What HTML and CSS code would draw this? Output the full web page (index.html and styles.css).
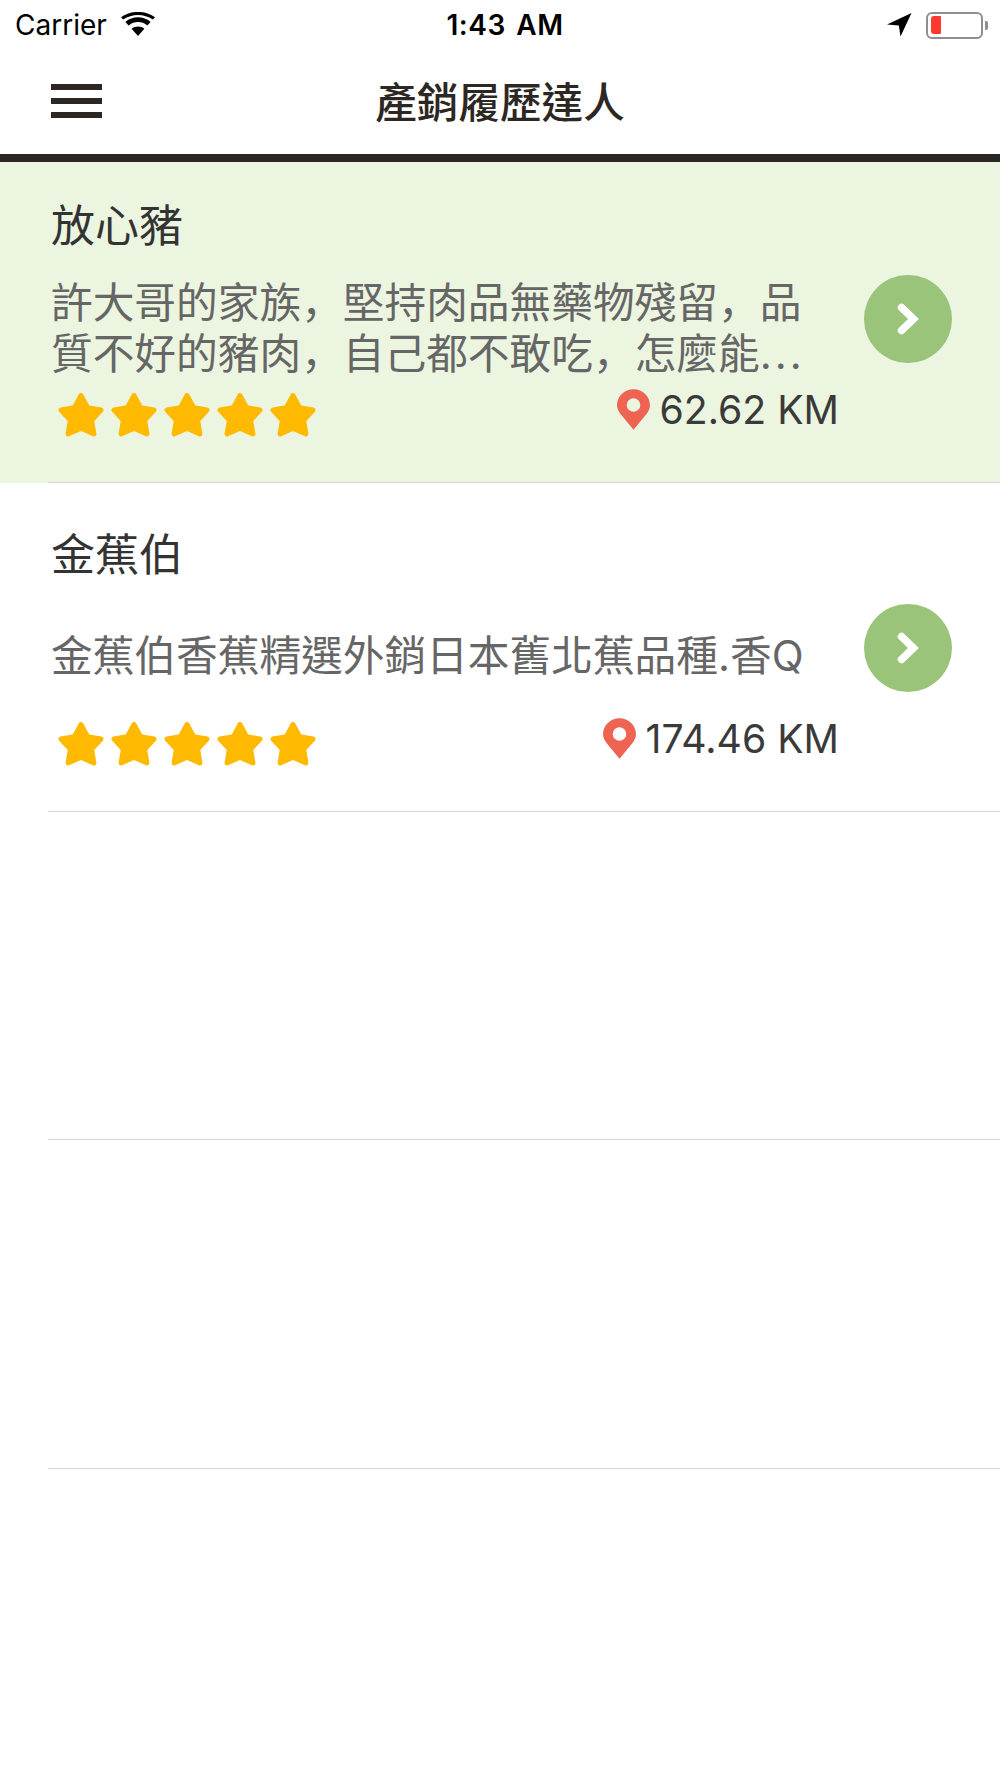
FILE: index.html
```html
<!DOCTYPE html>
<html lang="zh-Hant">
<head>
<meta charset="utf-8">
<title>產銷履歷達人</title>
<link rel="stylesheet" href="styles.css">
</head>
<body>
<svg class="defs" width="0" height="0" aria-hidden="true">
  <defs>
    <symbol id="star" viewBox="0 0 46 44">
      <path d="M23 2.5 L29.6 14.6 L43 17 L33.6 27.2 L35.9 41 L23 35.2 L10.1 41 L12.4 27.2 L3 17 L16.4 14.6 Z" fill="#ffba00" stroke="#ffba00" stroke-width="5" stroke-linejoin="round"/>
    </symbol>
    <symbol id="pin" viewBox="0 0 33 41">
      <path fill-rule="evenodd" d="M16.5 0.2 C25.7 0.2 33 7.4 33 16 C33 19.6 31.5 22.4 29.5 25 L16.5 40.8 L3.5 25 C1.5 22.4 0 19.6 0 16 C0 7.4 7.3 0.2 16.5 0.2 Z M16.5 9.2 A6.8 6.8 0 1 0 16.5 22.8 A6.8 6.8 0 1 0 16.5 9.2 Z" fill="#ee6352"/>
    </symbol>
    <symbol id="chev" viewBox="0 0 22 32">
      <path d="M4.5 4.5 L16.5 16 L4.5 27.5" fill="none" stroke="#fff" stroke-width="7.5" stroke-linecap="round" stroke-linejoin="miter"/>
    </symbol>
  </defs>
</svg>

<div class="status">
  <div class="status-left">
    <span class="carrier">Carrier</span>
    <svg class="wifi" viewBox="0 0 34 24"><path d="M17 24 L10.6 16.8 C14.3 13.6 19.7 13.6 23.4 16.8 Z M7.6 13.4 L4.4 9.9 C11.5 3.8 22.5 3.8 29.6 9.9 L26.4 13.4 C21 8.8 13 8.8 7.6 13.4 Z M2.2 7.4 L0 5.2 C9.6 -1.9 24.4 -1.9 34 5.2 L31.8 7.4 C23.2 1.4 10.8 1.4 2.2 7.4 Z" fill="#000"/></svg>
  </div>
  <div class="status-time">1:43 AM</div>
  <div class="status-right">
    <svg class="loc" viewBox="0 0 25 24"><path d="M0 11.5 L24.5 0 L13.5 23.5 L11.8 12.4 Z" fill="#000"/></svg>
    <div class="battery"><div class="battery-level"></div></div>
    <div class="battery-cap"></div>
  </div>
</div>

<header class="nav">
  <div class="menu"><span></span><span></span><span></span></div>
  <h1 class="nav-title">產銷履歷達人</h1>
</header>

<ul class="list">
  <li class="row row-active">
    <div class="row-main">
      <h2 class="name">放心豬</h2>
      <div class="desc-wrap">
        <p class="desc">許大哥的家族<span class="punct" lang="zh-Hans">&#xFF0C;</span>堅持肉品無藥物殘留<span class="punct" lang="zh-Hans">&#xFF0C;</span>品<br>質不好的豬肉<span class="punct" lang="zh-Hans">&#xFF0C;</span>自己都不敢吃<span class="punct" lang="zh-Hans">&#xFF0C;</span>怎麼能<span class="dots">...</span></p>
      </div>
      <div class="meta">
        <div class="stars">
          <svg class="star"><use href="#star"/></svg>
          <svg class="star"><use href="#star"/></svg>
          <svg class="star"><use href="#star"/></svg>
          <svg class="star"><use href="#star"/></svg>
          <svg class="star"><use href="#star"/></svg>
        </div>
        <div class="dist"><svg class="pin"><use href="#pin"/></svg><span>62.62 KM</span></div>
      </div>
    </div>
    <div class="go"><svg class="chev"><use href="#chev"/></svg></div>
  </li>
  <li class="row">
    <div class="row-main">
      <h2 class="name">金蕉伯</h2>
      <div class="desc-wrap">
        <p class="desc">金蕉伯香蕉精選外銷日本舊北蕉品種.香Q</p>
      </div>
      <div class="meta">
        <div class="stars">
          <svg class="star"><use href="#star"/></svg>
          <svg class="star"><use href="#star"/></svg>
          <svg class="star"><use href="#star"/></svg>
          <svg class="star"><use href="#star"/></svg>
          <svg class="star"><use href="#star"/></svg>
        </div>
        <div class="dist"><svg class="pin"><use href="#pin"/></svg><span>174.46 KM</span></div>
      </div>
    </div>
    <div class="go"><svg class="chev"><use href="#chev"/></svg></div>
  </li>
  <li class="row"></li>
  <li class="row"></li>
</ul>
</body>
</html>
```

FILE: styles.css
```css
* { box-sizing: border-box; }
html, body { margin: 0; padding: 0; }
body {
  width: 1000px;
  height: 1778px;
  background: #fff;
  overflow: hidden;
  font-family: "Inter", "Noto Sans CJK TC", sans-serif;
  color: #333;
}
.defs { display: block; height: 0; }

.status {
  height: 50px;
  padding: 0 12px 0 15px;
  display: flex;
  align-items: center;
  justify-content: space-between;
  position: relative;
  color: #000;
}
.status-left { display: flex; align-items: center; gap: 14px; }
.carrier { font: 400 28px/1 "Inter", sans-serif; }
.wifi { width: 34px; height: 24px; margin-top: -3px; }
.status-time {
  position: absolute;
  left: 0; right: 0;
  padding-left: 10px;
  text-align: center;
  font: 600 28px/1 "Inter", sans-serif;
  word-spacing: 3px;
  letter-spacing: 0.5px;
}
.status-right { display: flex; align-items: center; }
.loc { width: 25px; height: 24px; margin-right: 14px; }
.battery {
  width: 57px;
  height: 27px;
  border: 2.5px solid #8e8e8e;
  border-radius: 6px;
  padding: 2.5px;
}
.battery-level { width: 10px; height: 100%; background: #ff3b30; border-radius: 3px 1px 1px 3px; }
.battery-cap { width: 3px; height: 9px; background: #8e8e8e; margin-left: 2px; border-radius: 0 2px 2px 0; }

.nav {
  height: 112px;
  position: relative;
  z-index: 1;
  display: flex;
  align-items: center;
  justify-content: center;
  border-bottom: 8px solid #2d2723;
  background: #fff;
}
.menu {
  position: absolute;
  left: 51px;
  top: 34px;
  width: 51px;
  display: flex;
  flex-direction: column;
  gap: 8px;
}
.menu span { display: block; height: 6px; background: #2d2723; }
.nav-title {
  margin: -2px 0 0;
  font-family: "Noto Sans CJK TC", sans-serif;
  font-size: 41.6px;
  font-weight: 500;
  line-height: 1.2;
  color: #2d2723;
}

.list { list-style: none; margin: -8px 0 0; padding: 0; }
.row {
  height: 328.67px;
  display: flex;
  position: relative;
  padding: 0 48px 0 51px;
}
.row::after {
  content: "";
  position: absolute;
  left: 48px; right: 0; bottom: -0.4px;
  height: 1px;
  background: #d4d4d4;
}
.row-active { background: #ebf5df; }
.row-main { width: 788px; padding-top: 38px; }
.name {
  margin: 0;
  font-family: "Noto Sans CJK TC", sans-serif;
  font-size: 44px;
  font-weight: 400;
  line-height: 62px;
  color: #333;
}
.desc-wrap {
  height: 96px;
  margin-top: 25px;
  display: flex;
  align-items: center;
}
.desc {
  margin: 0;
  font-size: 41.7px;
  line-height: 48px;
  color: #666;
  white-space: nowrap;
}
.punct { font-family: "Noto Sans CJK SC", sans-serif; }
.dots { letter-spacing: 3px; }
.meta {
  display: flex;
  justify-content: space-between;
  align-items: flex-start;
  margin-top: 14px;
  height: 52px;
  width: 788px;
}
.stars { display: flex; margin: 4px 0 0 7px; gap: 7px; }
.star { width: 46px; height: 44px; }
.dist {
  display: flex;
  align-items: center;
  gap: 10px;
  font: 400 39.2px/1 "Inter", sans-serif;
  color: #3a3a3a;
}
.pin { width: 33px; height: 41px; }
.go {
  position: absolute;
  left: 864px;
  top: 121px;
  width: 88px;
  height: 88px;
  border-radius: 50%;
  background: #99c47a;
  display: flex;
  align-items: center;
  justify-content: center;
}
.chev { width: 22px; height: 32px; }
```
